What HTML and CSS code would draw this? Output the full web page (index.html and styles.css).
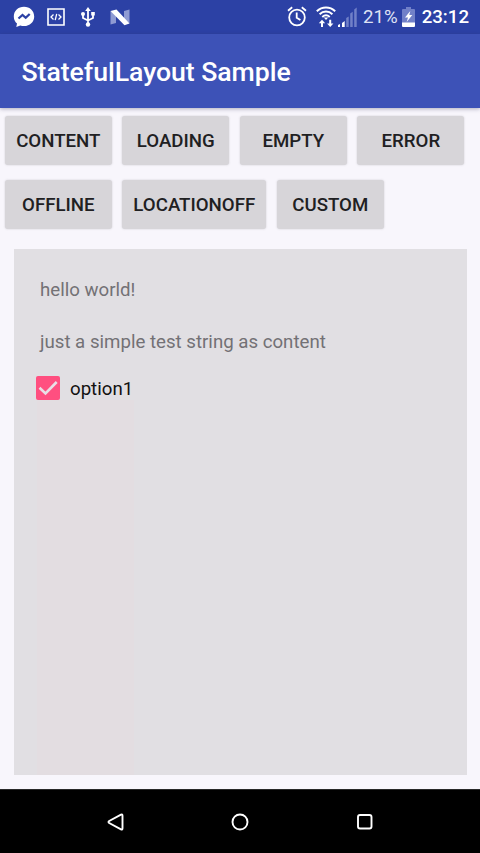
FILE: index.html
```html
<!DOCTYPE html>
<html lang="en">
<head>
<meta charset="utf-8">
<title>StatefulLayout Sample</title>
<link rel="stylesheet" href="styles.css">
</head>
<body>
<div class="screen">
  <div class="status-bar">
    <div class="notifications">
      <svg width="22" height="22" viewBox="0 0 22 22"><path fill="#fff" d="M11 .8C5.200.8.8 5 .8 10.400c0 3 1.300 5.400 3.200 7L3.300 21l4-1.600c1.200.4 2.400.6 3.700.6 5.800 0 10.200-4.200 10.200-9.600S16.800.8 11 .8z"/><path fill="none" stroke="#2c41a5" stroke-width="2.300" d="M5.500 12.500l4-3.500 3.200 2.800 4-3.800"/></svg>
      <svg width="18" height="18" viewBox="0 0 18 18" fill="none" stroke="#fff"><path stroke-width="1.600" d="M1 1h16v16H1z"/><path stroke-width="1.300" d="M6.500 6.500L4 9l2.500 2.500M11.500 6.500L14 9l-2.500 2.500M9.700 5.800l-1.500 6.400"/></svg>
      <svg width="16" height="20" viewBox="0 0 16 20"><g fill="none" stroke="#fff" stroke-width="1.800"><path d="M8 2v15M8 13.500l-5-2.500V7M8 13.500l5-2.500V7"/></g><g fill="#fff"><path d="M8 0l2.800 4H5.200zM11.200 5h3.600v3.600h-3.600z"/><circle cx="3" cy="7" r="2"/><circle cx="8" cy="17.500" r="2.200"/></g></svg>
      <svg width="20" height="17" viewBox="0 0 20 17"><path fill="#8f9bd3" d="M.5 2L6 6v8L.5 15.500zM14 2l5.500-1.500v14L14 10z"/><path fill="#fff" d="M.5 2L6.500.6l13 13.900-5 1.800z"/></svg>
    </div>
    <div class="system">
      <svg width="20" height="21" viewBox="0 0 20 21" fill="none" stroke="#fff" stroke-width="1.800"><circle cx="10" cy="11.500" r="7.800"/><path d="M9.700 6.500v5.300l3.700 2.200M1 4.700l4.200-3.500M14.800 1.200L19 4.700"/></svg>
      <svg class="wifi" width="20" height="22" viewBox="0 0 20 22"><g fill="none" stroke="#fff" stroke-width="2"><path d="M.8 5.300c5.300-5 13.100-5 18.400 0M3.600 8.200c3.700-3.500 9.100-3.500 12.800 0M6.300 11c2.200-2 5.200-2 7.400 0"/></g><path fill="#fff" d="M7.800 11.600h4.400L10 14zM6 13.800L2.800 17.300H5V21h2v-3.700h2.200zM14.200 21L11 17.500h2.200v-3.700h2v3.700h2.200z"/></svg>
      <svg class="signal" width="19" height="20" viewBox="0 0 19 20"><path fill="#fff" d="M0 20v-2l2-1v3zM4 20v-4l2.700-2v6z"/><path fill="#7180c8" d="M8.200 20v-9l2.500-1.500V20zM12.200 20V6.500l2.500-1.800V20zM16.200 20V2.500l2.500-2V20z"/></svg>
      <span class="percent">21%</span>
      <svg class="battery" width="13" height="20" viewBox="0 0 13 20"><path fill="#7180c8" d="M4 0h5v2h3q1 0 1 1v13H0V3q0-1 1-1h3z"/><path fill="#fff" d="M0 15.500h13V19q0 1-1 1H1q-1 0-1-1zM8.300 4L3 10.500h3L4.700 15l5.600-7H7.300z"/></svg>
      <span class="clock">23:12</span>
    </div>
  </div>
  <header class="app-bar">StatefulLayout Sample</header>
  <main class="main">
    <div class="buttons">
      <button>CONTENT</button><button>LOADING</button><button>EMPTY</button><button>ERROR</button>
      <button>OFFLINE</button><button class="wide">LOCATIONOFF</button><button>CUSTOM</button>
    </div>
    <section class="panel">
      <p>hello world!</p>
      <p>just a simple test string as content</p>
      <div class="option">
        <svg width="24" height="24" viewBox="0 0 24 24"><rect width="24" height="24" rx="2" fill="#ff4f80"/><path d="M3.500 11.700l6 5.800L20.700 6" fill="none" stroke="#e9dfe5" stroke-width="2.600"/></svg>
        <span>option1</span>
      </div>
    </section>
  </main>
  <nav class="nav-bar">
    <svg width="18" height="20" viewBox="0 0 18 20"><path d="M15 2.700q1.500-.8 1.500 1v12.600q0 1.800-1.500 1L3.200 11q-1.400-1 0-2z"/></svg>
    <svg width="18" height="18" viewBox="0 0 18 18"><circle cx="9" cy="9" r="7.500"/></svg>
    <svg width="18" height="18" viewBox="0 0 18 18"><rect x="2" y="2" width="13.500" height="13.500" rx="2"/></svg>
  </nav>
</div>
</body>
</html>
```
FILE: styles.css
```css
* { box-sizing: border-box; }
body { margin: 0; font-family: Roboto, "Liberation Sans", sans-serif; }
svg { display: block; flex: none; }
.screen { width: 480px; height: 853px; display: flex; flex-direction: column; background: #f8f6fc; overflow: hidden; }
.status-bar { height: 34px; flex: none; display: flex; justify-content: space-between; align-items: center; padding: 0 11px 0 13px; background: #2c41a5; color: #fff; }
.notifications { display: flex; align-items: center; }
.notifications svg:nth-child(2) { margin-left: 12px; }
.notifications svg:nth-child(3) { margin-left: 15px; }
.notifications svg:nth-child(4) { margin-left: 14px; }
.system { display: flex; align-items: center; font-size: 18.67px; line-height: 34px; }
.system svg:first-child { margin-top: -1px; }
.wifi { margin: 0 0 0 9px; }
.signal { margin-left: 2px; }
.percent { margin-left: 6px; color: #dfe2f4; }
.battery { margin-left: 4px; }
.clock { margin-left: 7px; font-weight: 500; }
.app-bar { height: 74px; flex: none; padding: 0 21.500px; line-height: 76px; letter-spacing: -.05px; font-size: 26.67px; font-weight: 500; color: #fff; background: #3d52b7; box-shadow: 0 1px 4px rgba(40, 40, 80, .35); }
.main { flex: 1; display: flex; flex-direction: column; padding: 8px 13.500px 14px; }
.buttons { display: flex; flex-wrap: wrap; gap: 15px 10.500px; margin: 0 -9px 20px -8.700px; }
.buttons button { width: 107px; height: 49px; padding: 1px 0 0; border: 0; border-radius: 3px; background: #d7d5d9; box-shadow: 0 0 2px rgba(80, 75, 85, .25); font: 500 18.67px/24px Roboto, "Liberation Sans", sans-serif; color: #202022; }
.buttons .wide { width: 144px; }
.panel { flex: 1; padding: 29px 22px 28px 22.500px; background: linear-gradient(#e3dde1, #e3dde1) 23px 100% / 97px 375px no-repeat #e1dfe3; }
.panel p { margin: 0 0 28px 4px; font-size: 18.67px; line-height: 24px; color: #737175; }
.option { display: flex; align-items: center; gap: 10px; margin-top: -7px; font-size: 18.67px; line-height: 24px; color: #111; }
.option span { padding-top: 2px; }
.option svg { margin-top: -1px; }
.nav-bar { height: 64px; flex: none; display: flex; justify-content: center; align-items: center; gap: 107px; background: #000; border-top: 1px solid #292929; }
.nav-bar svg { fill: none; stroke: #fff; stroke-width: 1.900; }
```
